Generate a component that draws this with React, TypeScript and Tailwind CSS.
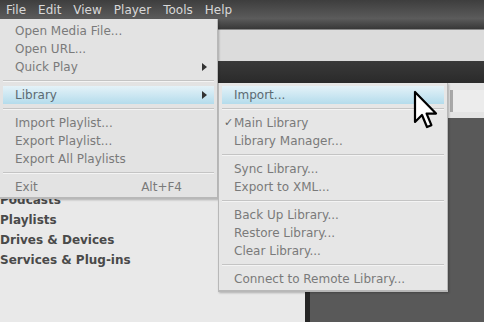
import React from 'react';

type Item = { label?: string; sep?: boolean; sub?: boolean; hot?: boolean; check?: boolean; accel?: string };

const fileItems: Item[] = [
    { label: 'Open Media File...' },
    { label: 'Open URL...' },
    { label: 'Quick Play', sub: true },
    { sep: true },
    { label: 'Library', sub: true, hot: true },
    { sep: true },
    { label: 'Import Playlist...' },
    { label: 'Export Playlist...' },
    { label: 'Export All Playlists' },
    { sep: true },
    { label: 'Exit', accel: 'Alt+F4' },
];

const libraryItems: Item[] = [
    { label: 'Import...', hot: true },
    { sep: true },
    { label: 'Main Library', check: true },
    { label: 'Library Manager...' },
    { sep: true },
    { label: 'Sync Library...' },
    { label: 'Export to XML...' },
    { sep: true },
    { label: 'Back Up Library...' },
    { label: 'Restore Library...' },
    { label: 'Clear Library...' },
    { sep: true },
    { label: 'Connect to Remote Library...' },
];

const MenuRows = ({ items }: { items: Item[] }) => (
    <>
        {items.map((it, i) =>
            it.sep ? (
                <div key={i} className="mx-[3px] my-[4px] h-[2px] border-t border-[#c4c4c4] bg-[#f4f4f4]" />
            ) : (
                <div
                    key={i}
                    className={
                        it.hot
                            ? 'relative mx-[3px] flex h-[18px] items-center bg-gradient-to-b from-[#e4f2f8] to-[#b4dcec] pl-[12px] pr-[6px] text-[#5c6a72]'
                            : 'relative mx-[3px] flex h-[18px] items-center pl-[12px] pr-[6px] text-[#7a7a7a]'
                    }
                >
                    {it.check && <span className="absolute left-[2px] top-[1px] text-[11px] text-[#666]">✓</span>}
                    <span className="flex-1">{it.label}</span>
                    {it.accel && <span className="mr-[26px]">{it.accel}</span>}
                    {it.sub && (
                        <svg width="5" height="8" viewBox="0 0 5 8" className="mr-[1px]">
                            <path d="M0 0 L5 4 L0 8 Z" fill="#333" />
                        </svg>
                    )}
                </div>
            )
        )}
    </>
);

export default function App() {
    return (
        <div className="relative h-[322px] w-[484px] overflow-hidden bg-[#585858] font-['DejaVu_Sans',sans-serif] text-[12px]">
            {/* menubar */}
            <div className="flex h-[19px] items-center gap-[12px] bg-gradient-to-b from-[#3e3e3e] to-[#5c5c5c] pl-[6px] text-[#d8d8d8]">
                <span>File</span>
                <span>Edit</span>
                <span>View</span>
                <span>Player</span>
                <span>Tools</span>
                <span>Help</span>
            </div>
            <div className="h-[10px] bg-gradient-to-b from-[#5a5a5a] to-[#383838]" />
            <div className="h-[32px] border-t border-[#8a8a8a] bg-[#dcdcdc]" />
            <div className="h-[22px] bg-gradient-to-b from-[#3a3a3a] to-[#2a2a2a]" />
            <div className="flex h-[239px]">
                <div className="w-[305px] bg-[#e9e9e9] pt-[107px] font-bold text-[#4a4a4a]">
                    <div className="flex h-[20px] items-center">Podcasts</div>
                    <div className="flex h-[20px] items-center">Playlists</div>
                    <div className="flex h-[20px] items-center">Drives &amp; Devices</div>
                    <div className="flex h-[20px] items-center">Services &amp; Plug-ins</div>
                </div>
                <div className="w-[5px] bg-[#262626]" />
                <div className="flex-1 bg-[#595959]">
                    <div className="flex h-[35px] bg-[#e4e4e4] pl-[140px] pt-[7px]">
                        <div className="h-[22px] w-[3px] bg-[#a8a8a8]" />
                        <div className="h-[22px] flex-1 bg-[#ececec]" />
                    </div>
                </div>
            </div>

            {/* File menu */}
            <div className="absolute left-0 top-[19px] w-[218px] border-b-2 border-r border-[#b8b8b8] bg-[#e3e3e3] pb-[1px] pt-[3px] shadow-[1px_1px_2px_rgba(0,0,0,0.25)]">
                <MenuRows items={fileItems} />
            </div>

            {/* Library submenu */}
            <div className="absolute left-[218px] top-[83px] w-[230px] border border-t-0 border-b-2 border-[#b8b8b8] bg-[#e6e6e6] pb-[2px] pt-[3px] shadow-[1px_1px_2px_rgba(0,0,0,0.25)]">
                <MenuRows items={libraryItems} />
            </div>

            {/* cursor */}
            <svg className="absolute left-[413px] top-[90px]" width="26" height="40" viewBox="0 0 13 20">
                <path d="M1 1 L1 16 L4.5 12.5 L7 18.5 L9.2 17.6 L6.8 11.8 L11.5 11.8 Z" fill="#fff" stroke="#000" strokeWidth="1.1" strokeLinejoin="round" />
            </svg>
        </div>
    );
}
